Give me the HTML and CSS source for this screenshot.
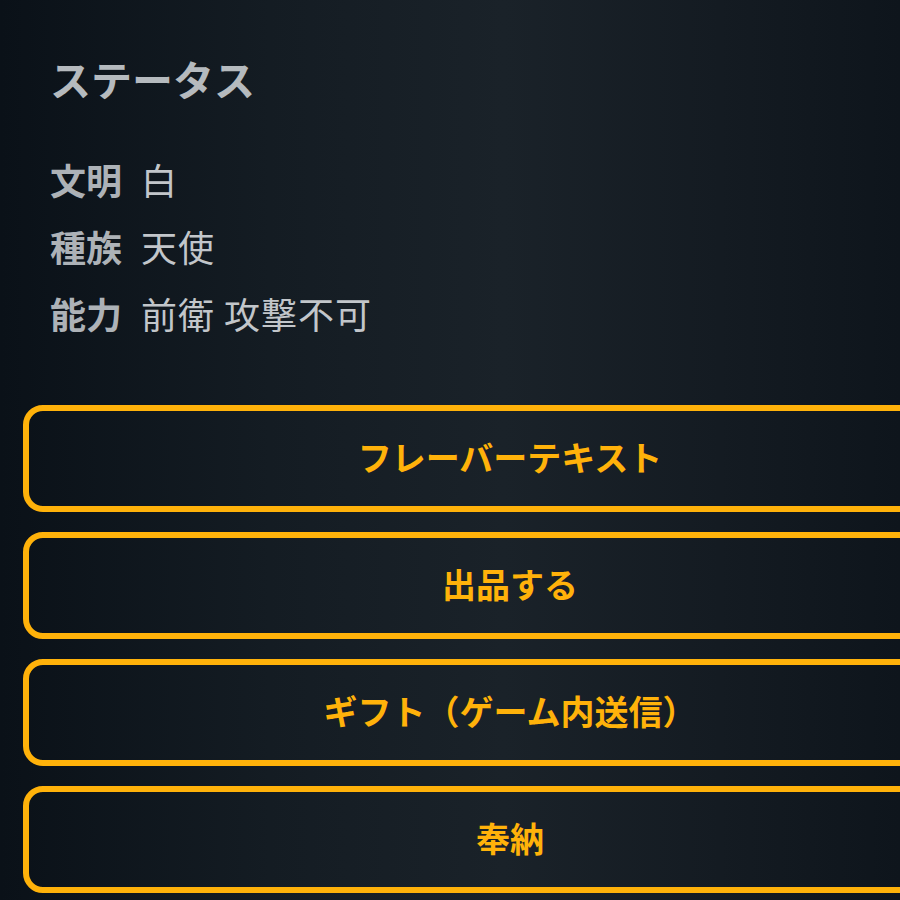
FILE: index.html
```html
<!DOCTYPE html>
<html lang="ja">
<head>
<meta charset="utf-8">
<title>ステータス</title>
<link rel="stylesheet" href="styles.css">
</head>
<body>
<main class="page">
  <section class="status">
    <h2 class="status-title">ステータス</h2>
    <dl class="stats">
      <div class="stat-row"><dt class="stat-label">文明</dt><dd class="stat-value">白</dd></div>
      <div class="stat-row"><dt class="stat-label">種族</dt><dd class="stat-value">天使</dd></div>
      <div class="stat-row"><dt class="stat-label">能力</dt><dd class="stat-value">前衛 攻撃不可</dd></div>
    </dl>
  </section>
  <div class="actions">
    <button class="action-btn" type="button">フレーバーテキスト</button>
    <button class="action-btn" type="button">出品する</button>
    <button class="action-btn" type="button">ギフト（ゲーム内送信）</button>
    <button class="action-btn" type="button">奉納</button>
  </div>
</main>
</body>
</html>
```
FILE: styles.css
```css
html, body {
  margin: 0;
  padding: 0;
}
body {
  background: linear-gradient(90deg, #0a1118 0%, #141c23 30%, #1a2229 56%, #141b22 80%, #0e151c 100%);
  font-family: "Noto Sans CJK JP", "Noto Sans", sans-serif;
  width: 900px;
  height: 900px;
  overflow: hidden;
}
.page {
  box-sizing: border-box;
  width: 900px;
  height: 900px;
  overflow: hidden;
  padding: 48px 0 0 23px;
}
.status {
  padding-left: 27px;
}
.status-title {
  margin: 0 0 38px;
  font-size: 41px;
  line-height: 60px;
  font-weight: 700;
  color: #b5babe;
}
.stats {
  margin: 0;
  padding: 0;
}
.stat-row {
  display: flex;
  height: 67px;
  align-items: center;
  font-size: 36px;
  line-height: 67px;
}
.stat-label {
  font-weight: 700;
  color: #adb2b7;
  margin-right: 19px;
}
.stat-value {
  margin: 0;
  font-weight: 400;
  color: #c2c6ca;
  letter-spacing: 1px;
}
.actions {
  margin-top: 58px;
  display: flex;
  flex-direction: column;
  gap: 20px;
  width: 974px;
}
.action-btn {
  box-sizing: border-box;
  height: 107px;
  width: 974px;
  border: 6px solid #ffb20a;
  border-radius: 20px;
  background: transparent;
  color: #ffb20a;
  font-family: "Noto Sans CJK JP", "Noto Sans", sans-serif;
  font-size: 34px;
  font-weight: 700;
  display: flex;
  align-items: center;
  justify-content: center;
  padding: 0 0 4px;
}
```
